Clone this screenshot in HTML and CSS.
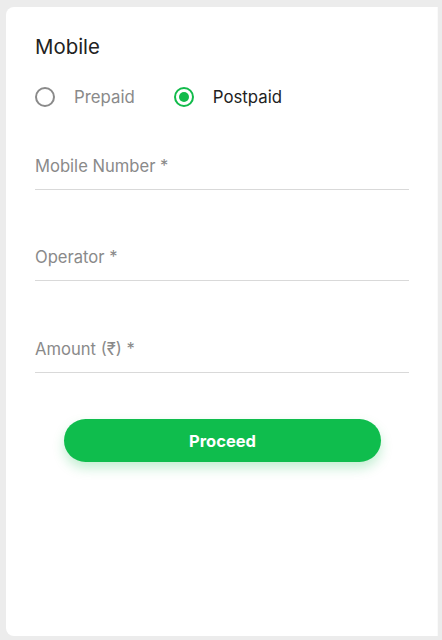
FILE: index.html
```html
<!DOCTYPE html>
<html>
<head>
<meta charset="utf-8">
<link rel="stylesheet" href="styles.css">
</head>
<body>
<div class="card">
  <h2 class="title">Mobile</h2>
  <div class="radios">
    <label class="radio">
      <span class="circle"></span>
      <span class="rlabel">Prepaid</span>
    </label>
    <label class="radio checked">
      <span class="circle"><span class="dot"></span></span>
      <span class="rlabel">Postpaid</span>
    </label>
  </div>
  <div class="field field-first"><span class="flabel">Mobile Number *</span></div>
  <div class="field"><span class="flabel">Operator *</span></div>
  <div class="field field-last"><span class="flabel">Amount (₹) *</span></div>
  <div class="actions">
    <button class="proceed">Proceed</button>
  </div>
</div>
</body>
</html>
```
FILE: styles.css
```css
html, body {
  margin: 0;
  padding: 0;
}
body {
  background: #ececec;
  font-family: Inter, "Open Sans", "Liberation Sans", sans-serif;
  width: 442px;
  height: 640px;
  overflow: hidden;
}
.card {
  box-sizing: border-box;
  margin: 7px 0 0 6px;
  width: 432px;
  height: 629px;
  background: #fff;
  border-radius: 8px 0 0 8px;
  padding: 28px 28px 0 29px;
  border-right: 1px solid #fafafa;
}
.title {
  margin: 0;
  font-size: 20.4px;
  font-weight: 400;
  line-height: 24px;
  color: #222;
}
.radios {
  display: flex;
  align-items: center;
  gap: 39px;
  margin-top: 24px;
  height: 28px;
}
.radio {
  display: flex;
  align-items: center;
  gap: 19px;
}
.circle {
  box-sizing: border-box;
  width: 20px;
  height: 20px;
  border-radius: 50%;
  border: 2px solid #8a8a8a;
  display: flex;
  align-items: center;
  justify-content: center;
}
.checked .circle {
  border-color: #12bb4b;
}
.dot {
  width: 10px;
  height: 10px;
  border-radius: 50%;
  background: #12bb4b;
}
.rlabel {
  font-size: 16.8px;
  color: #8a8a8a;
}
.checked .rlabel {
  color: #222;
}
.field {
  height: 91px;
  box-sizing: border-box;
  border-bottom: 1px solid #d9d9d9;
  display: flex;
  align-items: flex-end;
  padding-bottom: 13px;
}
.field-first {
  height: 79px;
}
.field-last {
  height: 92px;
}
.flabel {
  font-size: 16.6px;
  color: #8a8a8a;
  line-height: 20px;
}
.actions {
  display: flex;
  justify-content: center;
  margin-top: 46px;
  padding-left: 1px;
}
.proceed {
  width: 317px;
  height: 43px;
  border: none;
  border-radius: 22px;
  background: #0fbd4d;
  color: #fff;
  font-family: Inter, "Open Sans", sans-serif;
  font-weight: 700;
  font-size: 16.5px;
  box-shadow: 0 6px 12px rgba(15, 189, 77, 0.25);
}
```
